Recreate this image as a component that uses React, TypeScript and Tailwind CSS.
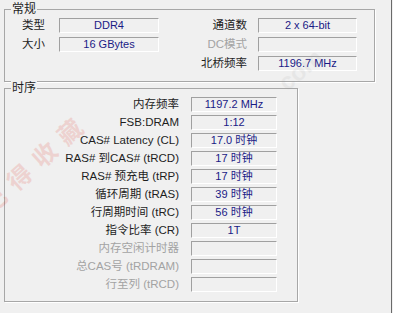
import React from "react";

const FONT = { fontFamily: '"Liberation Sans", "Noto Sans CJK SC", sans-serif' };

function Field({ value, w }: { value?: string; w: string }) {
  return (
    <div
      className={`h-[15px] ${w} border-t border-l border-t-[#a0a0a0] border-l-[#a0a0a0] border-b border-r border-b-white border-r-white bg-[#f0f0f0] flex items-center justify-center text-[11px] leading-none text-[#1a1a86]`}
    >
      {value}
    </div>
  );
}

function Label({ text, disabled }: { text: string; disabled?: boolean }) {
  return (
    <div
      className={`h-[15px] flex items-center justify-end whitespace-nowrap text-[11.5px] leading-none ${
        disabled ? "text-[#a3a3a3]" : "text-[#1e1e1e]"
      }`}
    >
      {text}
    </div>
  );
}

function Group({
  title,
  className,
  children,
}: {
  title: string;
  className: string;
  children: React.ReactNode;
}) {
  return (
    <div
      className={`relative border border-[#a7a7a7] shadow-[1px_1px_0_#ffffff] ${className}`}
    >
      <span className="absolute left-[6px] top-[-8px] px-[1px] bg-[#f0f0f0] text-[12px] leading-[14px] text-[#1e1e1e]">
        {title}
      </span>
      {children}
    </div>
  );
}

const timing: [string, string, boolean?][] = [
  ["内存频率", "1197.2 MHz"],
  ["FSB:DRAM", "1:12"],
  ["CAS# Latency (CL)", "17.0 时钟"],
  ["RAS# 到CAS# (tRCD)", "17 时钟"],
  ["RAS# 预充电 (tRP)", "17 时钟"],
  ["循环周期 (tRAS)", "39 时钟"],
  ["行周期时间 (tRC)", "56 时钟"],
  ["指令比率 (CR)", "1T"],
  ["内存空闲计时器", "", true],
  ["总CAS号 (tRDRAM)", "", true],
  ["行至列 (tRCD)", "", true],
];

export default function App() {
  return (
    <div
      className="relative w-[393px] h-[313px] bg-[#f0f0f0] overflow-hidden"
      style={FONT}
    >
      <div className="w-[392px] h-[313px] border-r border-r-[#6a6a6a] pt-[9px]">
        <Group title="常规" className="ml-[4px] w-[371px] h-[73px]">
          <div className="flex pt-[8px]">
            <div className="flex flex-col gap-[4px] w-[40px]">
              <Label text="类型" />
              <Label text="大小" />
            </div>
            <div className="flex flex-col gap-[4px] ml-[14px]">
              <Field value="DDR4" w="w-[100px]" />
              <Field value="16 GBytes" w="w-[100px]" />
            </div>
            <div className="flex flex-col gap-[4px] w-[88px]">
              <Label text="通道数" />
              <Label text="DC模式" disabled />
              <Label text="北桥频率" />
            </div>
            <div className="flex flex-col gap-[4px] ml-[11px]">
              <Field value="2 x 64-bit" w="w-[99px]" />
              <Field value="" w="w-[99px]" />
              <Field value="1196.7 MHz" w="w-[99px]" />
            </div>
          </div>
        </Group>

        <Group title="时序" className="ml-[4px] mt-[6px] w-[294px] h-[214px]">
          <div className="flex pt-[8px]">
            <div className="flex flex-col gap-[3px] w-[174px]">
              {timing.map(([l, , d]) => (
                <Label key={l} text={l} disabled={d} />
              ))}
            </div>
            <div className="flex flex-col gap-[3px] ml-[12px]">
              {timing.map(([l, v]) => (
                <Field key={l} value={v} w="w-[86px]" />
              ))}
            </div>
          </div>
        </Group>
      </div>

      <div className="pointer-events-none absolute left-[-4px] top-[190px] rotate-[-42deg] origin-bottom-left whitespace-nowrap text-[24px] leading-[30px] font-bold text-[#e0301e] opacity-[0.15] tracking-[10px]">
        记得收藏
      </div>
      <div className="pointer-events-none absolute left-[276px] top-[52px] rotate-[-40deg] whitespace-nowrap text-[24px] font-bold text-[#9a9a9a] opacity-[0.1]">
        com
      </div>
    </div>
  );
}
